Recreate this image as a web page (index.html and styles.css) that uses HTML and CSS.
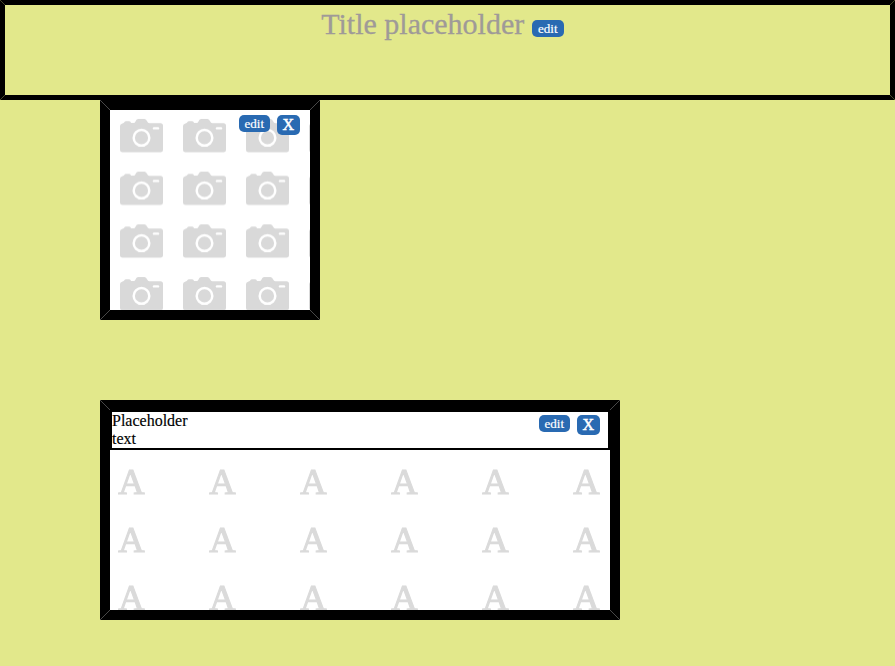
FILE: index.html
```
<!DOCTYPE html>
<html lang="en">
<head>
<meta charset="utf-8">
<title>Page editor</title>
<link rel="stylesheet" href="styles.css">
</head>
<body>
<header class="banner">
  <h1 class="title">Title placeholder</h1>
  <button class="btn">edit</button>
</header>
<main class="widgets">
  <section class="box image-box">
    <svg class="pattern" width="200" height="200" aria-hidden="true">
      <defs>
        <pattern id="cameras" width="63" height="52.7" patternUnits="userSpaceOnUse">
          <path fill="#d9d9d9" d="M12.5 13.3Q14 13 14.3 12.2Q14.8 11.2 16 11.2H19Q20.3 11.2 20.8 12.5Q21 13 22 13H23.5Q25 13 25.5 11.5Q26.3 9 28 9H34.5Q36.3 9 37.2 11.5Q37.8 13.2 39.5 13.2H50.5Q53 13.2 53 15.7V39.5Q53 42.2 50.5 42.2H12.5Q10 42.2 10 39.5V16Q10 13.8 12.5 13.3Z"/>
          <circle cx="31.5" cy="27.8" r="7.8" fill="none" stroke="#fff" stroke-width="2.5"/>
          <rect x="42.8" y="17.1" width="6.4" height="2.4" rx="1.2" fill="#fff"/>
        </pattern>
      </defs>
      <rect width="200" height="200" fill="url(#cameras)"/>
    </svg>
    <div class="tools"><button class="btn">edit</button><button class="btn close">X</button></div>
  </section>
  <section class="box text-box">
    <div class="text-head"><p class="copy">Placeholder text</p></div>
    <svg class="letters" width="500" height="160" aria-hidden="true">
      <defs>
        <pattern id="letters" width="91" height="58" patternUnits="userSpaceOnUse">
          <text class="letter" x="8.3" y="43.6" textLength="26.4" lengthAdjust="spacingAndGlyphs">A</text>
        </pattern>
      </defs>
      <rect width="500" height="160" fill="url(#letters)"/>
    </svg>
    <div class="tools"><button class="btn">edit</button><button class="btn close">X</button></div>
  </section>
</main>
</body>
</html>
```
FILE: styles.css
```
* { box-sizing: border-box; }
body {
  margin: 0;
  min-height: 666px;
  background: #e2e88b;
  font-family: "Liberation Serif", "Times New Roman", serif;
}
.banner {
  --edge: 5px;
  --seam: #45472b;
  position: relative;
  display: flex;
  justify-content: center;
  align-items: flex-start;
  gap: 7.5px;
  height: 100px;
  padding-right: 10px;
  border: 5px solid #000;
}
.title {
  margin: 2px 0 0;
  color: #9f9a98;
  font-size: 30px;
  font-weight: 400;
  line-height: 34px;
  -webkit-text-stroke: 0.3px #9f9a98;
}
.btn {
  display: block;
  width: 30.5px;
  height: 17px;
  padding: 0;
  border: 0;
  border-radius: 5px;
  background: #296ab2;
  color: #fff;
  font: 13px/17px "Liberation Serif", "Times New Roman", serif;
  -webkit-text-stroke: 0.2px #fff;
}
.banner .btn { width: 32px; margin-top: 15px; }
.close {
  width: 23.5px;
  height: 20px;
  font-size: 16px;
  line-height: 20px;
  -webkit-text-stroke: 0.5px #fff;
}
.widgets {
  display: flex;
  flex-direction: column;
  align-items: flex-start;
  gap: 80px;
  padding-left: 100px;
}
.box {
  --edge: 10px;
  --seam: #484848;
  position: relative;
  border: 10px solid #000;
  background: #fff;
}
/* mitred corner seams of the frame */
.banner::after, .box::after {
  --down: linear-gradient(to top right, transparent calc(50% - 0.5px), var(--seam) calc(50% - 0.5px), var(--seam) calc(50% + 0.5px), transparent calc(50% + 0.5px));
  --up: linear-gradient(to bottom right, transparent calc(50% - 0.5px), var(--seam) calc(50% - 0.5px), var(--seam) calc(50% + 0.5px), transparent calc(50% + 0.5px));
  content: "";
  position: absolute;
  inset: calc(-1 * var(--edge));
  pointer-events: none;
  background:
    var(--down) left top,
    var(--up) right top,
    var(--up) left bottom,
    var(--down) right bottom;
  background-size: var(--edge) var(--edge);
  background-repeat: no-repeat;
}
.image-box { width: 220px; height: 220px; }
.text-box { width: 520px; height: 220px; }
.pattern, .letters { display: block; }
.tools {
  position: absolute;
  top: 5px;
  right: 10px;
  display: flex;
  align-items: flex-start;
  gap: 7px;
}
.text-head {
  height: 40px;
  border: 2px solid #000;
}
.copy {
  width: 100px;
  margin: 0;
  font-size: 16px;
  line-height: 18px;
  -webkit-text-stroke: 0.15px #000;
}
.letter {
  fill: #dadada;
  stroke: #dadada;
  stroke-width: 1.1px;
  font: 35px "Liberation Serif", serif;
}
```
